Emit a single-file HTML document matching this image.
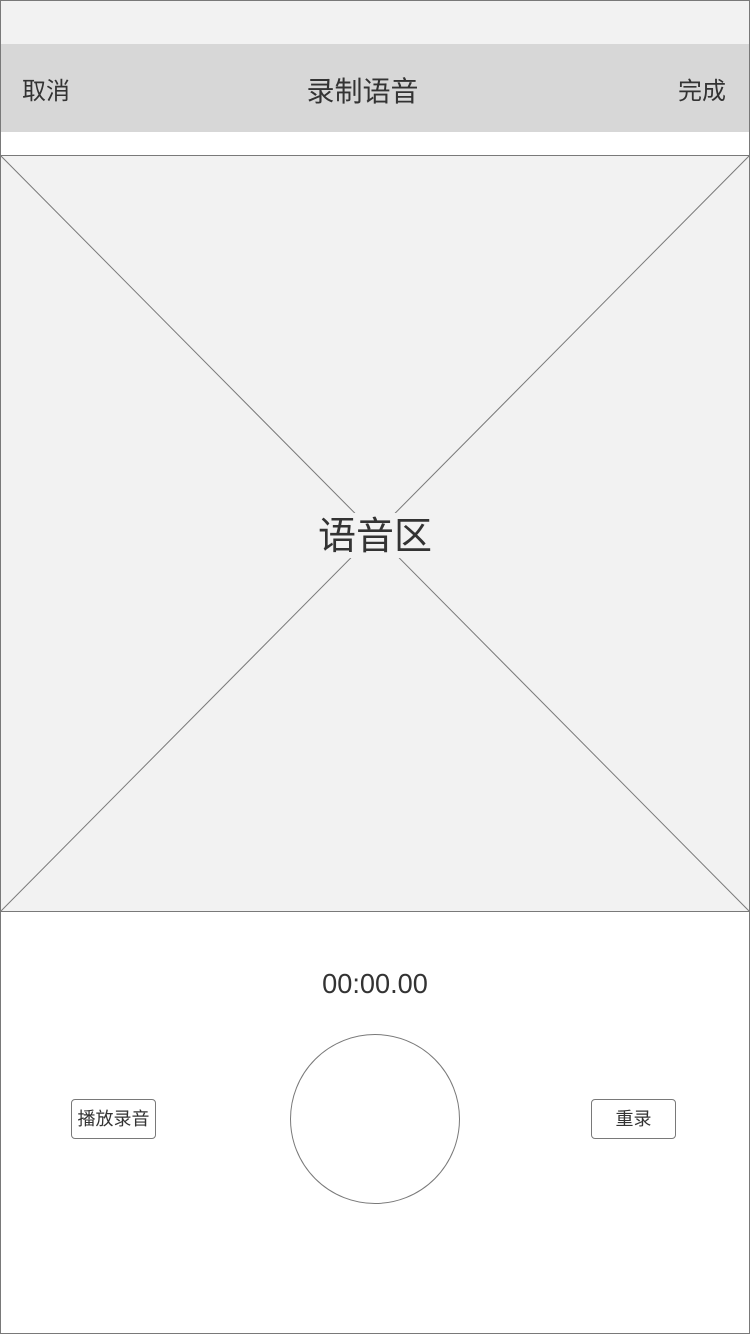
<!DOCTYPE html>
<html><head><meta charset="utf-8"><style>
*{margin:0;padding:0;box-sizing:border-box}
body{width:750px;height:1334px;position:relative;background:#fff;font-family:"Liberation Sans","Noto Sans CJK SC",sans-serif;color:#333;overflow:hidden}
.frame{position:absolute;left:0;top:0;width:750px;height:1334px;border:1px solid #797979;pointer-events:none;z-index:5}
.status{position:absolute;left:0;top:0;width:750px;height:44px;background:#f2f2f2}
.hdr{position:absolute;left:0;top:44px;width:750px;height:88px;background:#d7d7d7}
.t{position:absolute;white-space:nowrap}
.box{position:absolute;left:0;top:155px;width:750px;height:757px;background:#f2f2f2;border:1px solid #797979}
.btn{position:absolute;top:1099px;width:85px;height:40px;border:1px solid #797979;border-radius:4px;background:#fff;font-size:18px;text-align:center;line-height:38px}
</style></head><body>
<div class="status"></div>
<div class="hdr"></div>
<div class="t" style="left:22px;top:76px;font-size:24px;line-height:32px">取消</div>
<div class="t" style="left:0;width:725px;text-align:center;top:73px;font-size:28px;line-height:38px">录制语音</div>
<div class="t" style="right:24px;top:76px;font-size:24px;line-height:32px">完成</div>
<div class="box">
<svg width="748" height="755" style="position:absolute;left:0;top:0">
<line x1="0" y1="0" x2="748" y2="755" stroke="#797979" stroke-width="1"/>
<line x1="748" y1="0" x2="0" y2="755" stroke="#797979" stroke-width="1"/>
<rect x="340" y="357" width="70" height="45" fill="#f2f2f2"/>
</svg>
<div class="t" style="left:0;width:748px;text-align:center;top:359px;font-size:38px;line-height:44px">语音区</div>
</div>
<div class="t" style="left:0;width:750px;text-align:center;top:967px;font-size:28px;line-height:34px;transform:scaleX(0.97)">00:00.00</div>
<div style="position:absolute;left:290px;top:1034px;width:170px;height:170px;border:1px solid #797979;border-radius:50%"></div>
<div class="btn" style="left:71px">播放录音</div>
<div class="btn" style="left:591px">重录</div>
<div class="frame"></div>
</body></html>
